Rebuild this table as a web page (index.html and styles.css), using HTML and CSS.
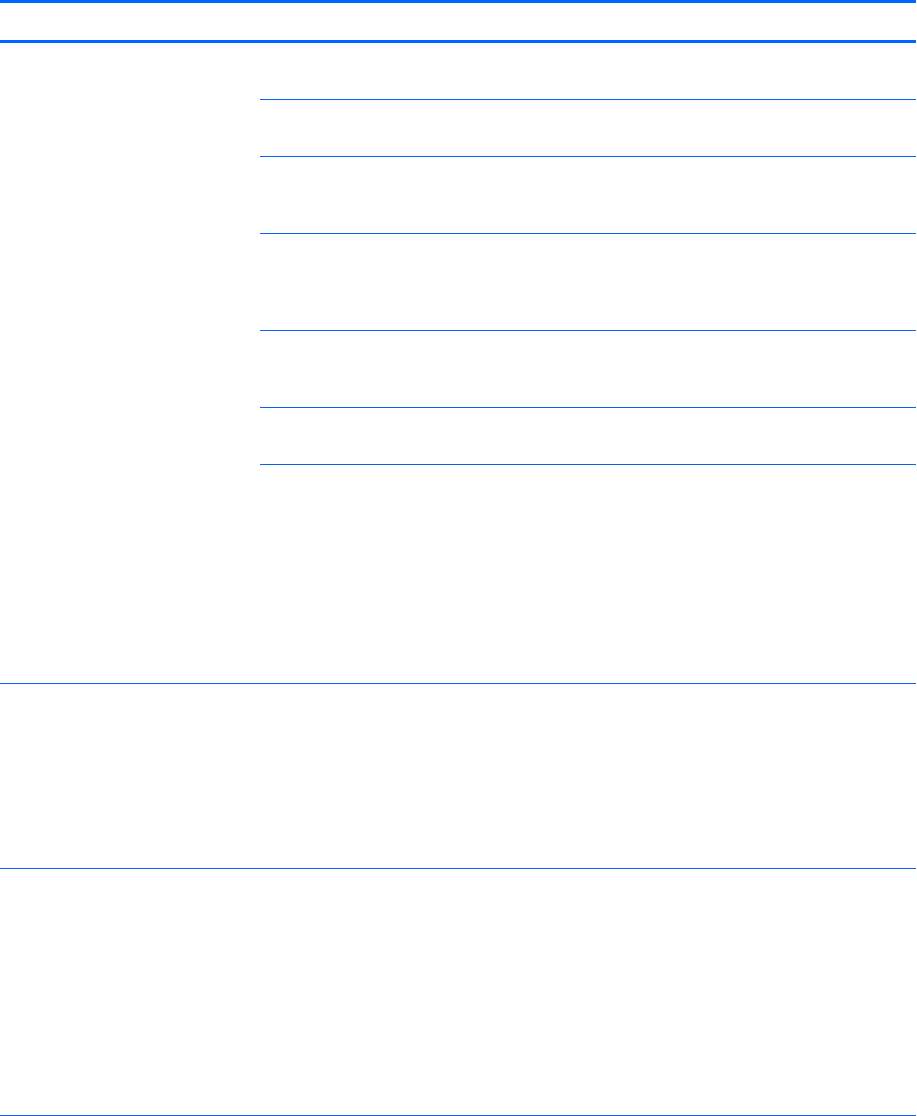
FILE: index.html
```html
<!DOCTYPE html>
<html lang="en">
<head>
  <meta charset="UTF-8" />
  <meta name="viewport" content="width=device-width, initial-scale=1.0" />
  <title>Table</title>
  <link rel="stylesheet" href="styles.css">
</head>
<body>
  <!-- Spec table (empty cells) -->
  <div class="spec-table">
    <div class="head-row">
      <div class="head-cell"></div>
      <div class="head-cell"></div>
    </div>

    <!-- Group with nested sub rows -->
    <div class="group">
      <div class="group-label"></div>
      <div class="sub-rows">
        <div class="sub-row h57"></div>
        <div class="sub-row h57"></div>
        <div class="sub-row h77"></div>
        <div class="sub-row h97"></div>
        <div class="sub-row h77"></div>
        <div class="sub-row h57"></div>
        <div class="sub-row last"></div>
      </div>
    </div>

    <div class="row h185">
      <div class="cell"></div>
      <div class="cell"></div>
    </div>
    <div class="row h247">
      <div class="cell"></div>
      <div class="cell"></div>
    </div>
  </div>
</body>
</html>
```

FILE: styles.css
```css
/* Global Styles */
body {
  font-family: 'Liberation Sans', Arial, sans-serif;
  margin: 0;
  padding: 0;
  background: #fff;
  color: #000;
}
.spec-table {
  width: 916px;
  font-size: 13px;
}
/* Header */
.head-row {
  display: grid;
  grid-template-columns: 260px 1fr;
  height: 43px;
  box-sizing: border-box;
  border-top: 3px solid #0066ff;
  border-bottom: 3px solid #0066ff;
}
/* Group with sub rows */
.group {
  display: grid;
  grid-template-columns: 260px 1fr;
  height: 641px;
  box-sizing: border-box;
  border-bottom: 1px solid #0a63f2;
}
.sub-rows {
  display: flex;
  flex-direction: column;
}
.sub-row {
  box-sizing: border-box;
  border-bottom: 1px solid #0a63f2;
}
.sub-row.last {
  border-bottom: none;
  flex: 1;
}
/* Plain rows */
.row {
  display: grid;
  grid-template-columns: 260px 1fr;
  box-sizing: border-box;
  border-bottom: 1px solid #0a63f2;
}
.h57 { height: 57px; }
.h77 { height: 77px; }
.h97 { height: 97px; }
.h185 { height: 185px; }
.h247 { height: 247px; }
```
